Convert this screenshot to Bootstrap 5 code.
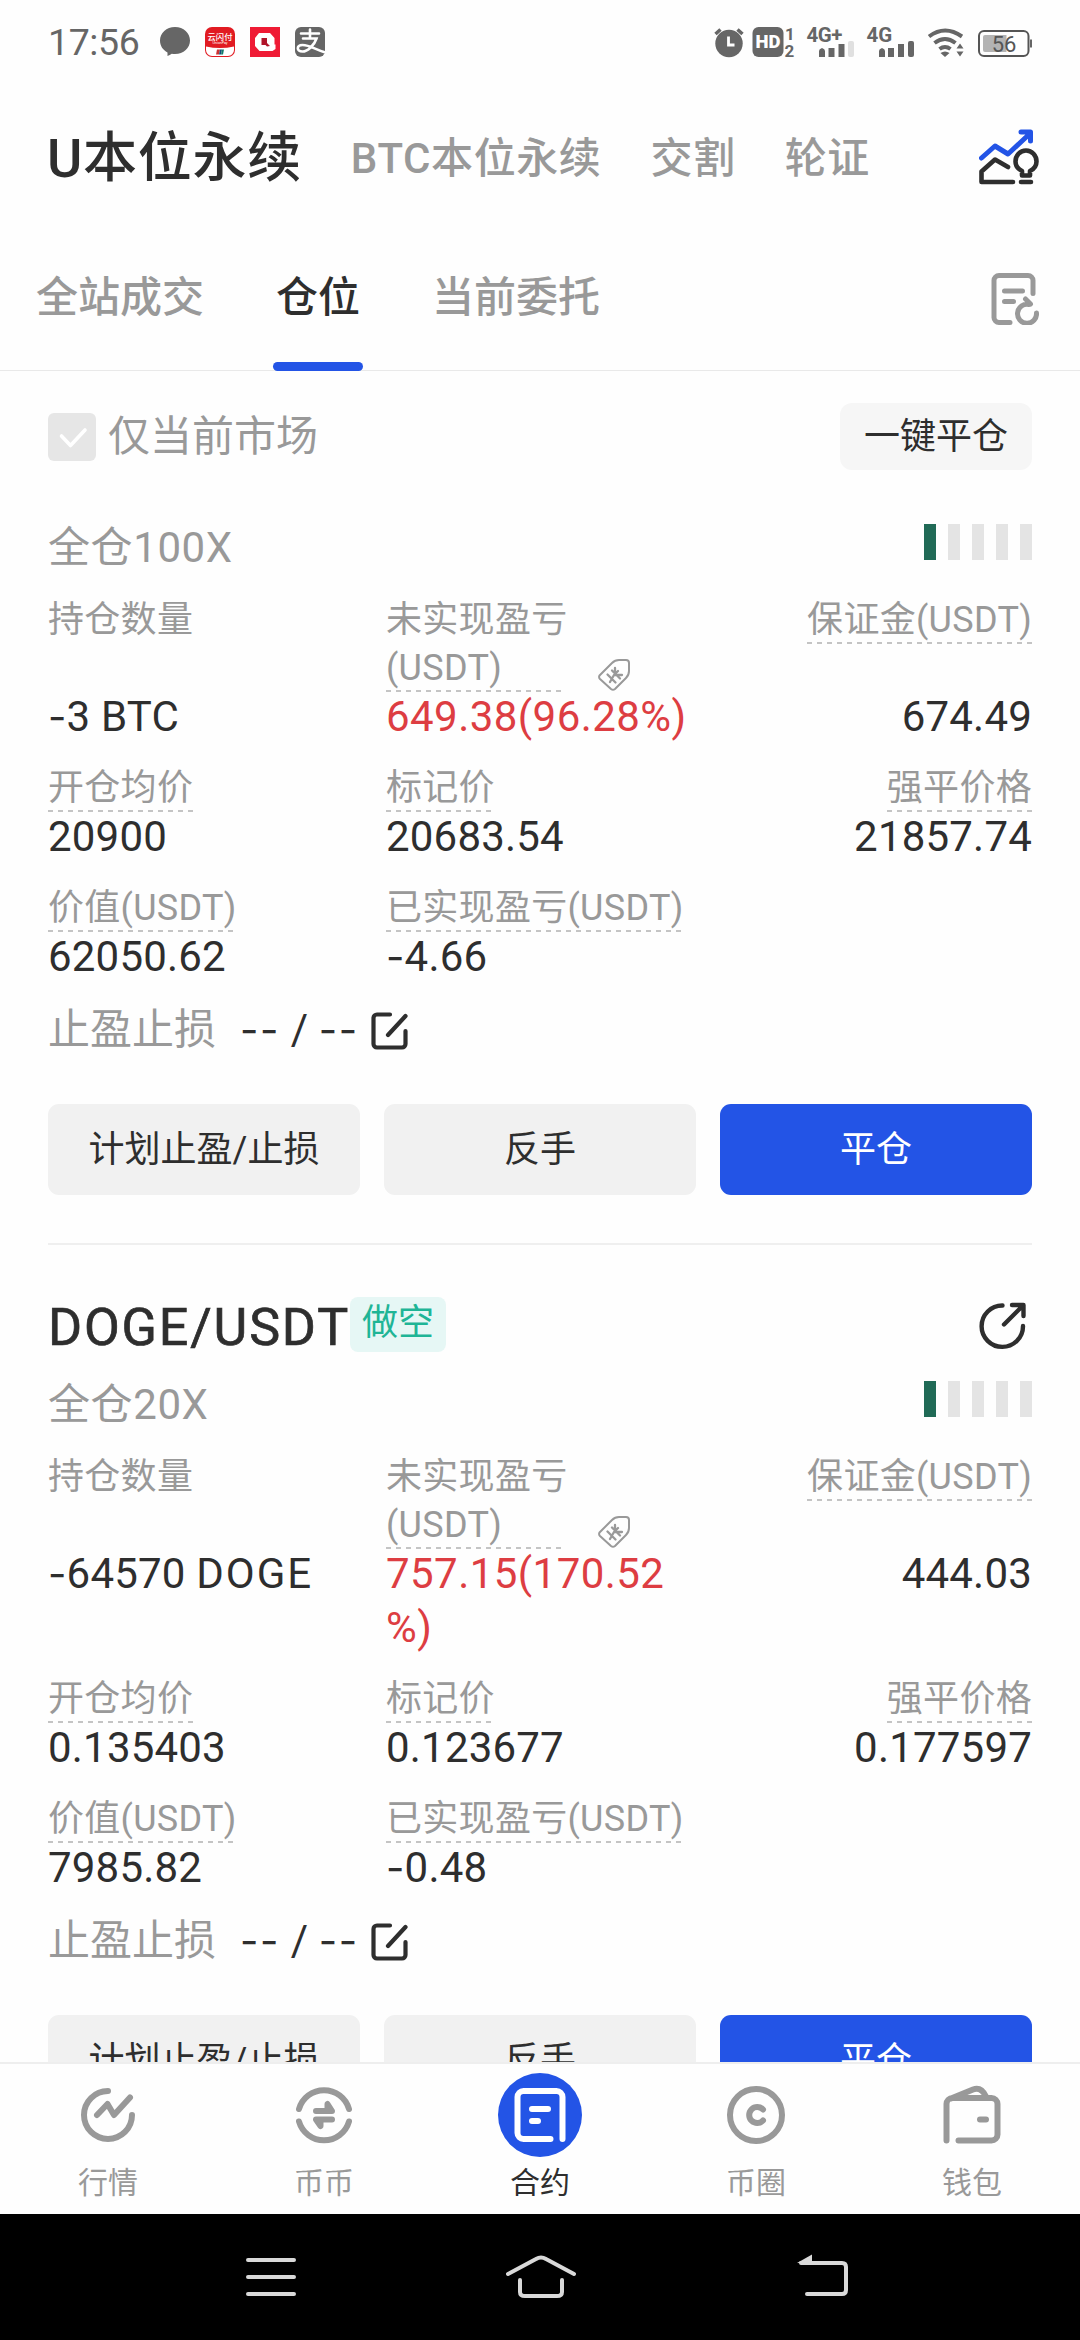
<!DOCTYPE html>
<html lang="zh-CN">
<head>
<meta charset="utf-8">
<meta name="viewport" content="width=device-width, initial-scale=1">
<title>合约 - 仓位</title>
<link href="https://cdn.jsdelivr.net/npm/bootstrap@5.3.0/dist/css/bootstrap.min.css" rel="stylesheet">
<style>
  body { font-family: Roboto, "Noto Sans CJK SC", sans-serif; color: #2e2e2e; background: #fefefe; }
  svg { display: block; flex: none; }
  .screen { width: 1080px; height: 2340px; overflow: hidden; }
  .muted { color: #999; }
  .px48 { padding-left: 48px; padding-right: 48px; }

  .status { height: 84px; padding-left: 48px; }
  .clock { font-size: 37.5px; line-height: 84px; color: #666; width: 112px; letter-spacing: -.4px; }

  .market-tabs { height: 148px; gap: 49px; padding: 2px 41px 0 47px; font-size: 42px; font-weight: 500; line-height: 60px; letter-spacing: .6px; }
  .market-tabs .current { font-size: 54px; color: #2e2e2e; letter-spacing: .7px; }
  .market-tabs svg { margin-bottom: 4px; }

  .order-tabs { height: 139px; padding: 0 41px 0 36px; gap: 72px; font-size: 42px; font-weight: 500; border-bottom: 1px solid #e9e9e9; }
  .order-tabs .nav-link { padding: 0; line-height: 132px; color: #999; }
  .order-tabs .nav-link.active { color: #2e2e2e; }
  .order-tabs .nav-link.active::after { content: ""; position: absolute; left: -3px; right: -3px; bottom: -1px; height: 9px; border-radius: 5px; background: #2354e6; }
  .order-tabs svg { margin-top: 41px; }

  .filter { padding-top: 32px; height: 151px; }
  .tick { width: 48px; height: 48px; border-radius: 6px; background: #e6e6e6; margin-right: 12px; }
  .filter-label { font-size: 42px; line-height: 66px; padding-top: 1px; }
  .btn-soft { background: #f6f6f6; font-size: 36px; line-height: 68px; height: 67px; padding: 0; width: 192px; border-radius: 12px; border: 0; color: #2e2e2e; }

  .lever { height: 74px; font-size: 42px; line-height: 52px; letter-spacing: .6px; }
  .level { gap: 12px; margin-top: 2px; }
  .level i { width: 12px; height: 36px; background: #e4e4e4; }
  .level i.on { background: #206a56; }

  .cell-a { width: 338px; }
  .cell-b { width: 320px; }
  .cell-c { flex: 1; text-align: right; }
  .facts { margin-bottom: 18px; }
  .cap { font-size: 36px; line-height: 48px; color: #999; letter-spacing: .3px; white-space: nowrap; }
  .cap-slot { flex: 1 0 auto; }
  .dashed { display: inline-block; vertical-align: top; background: repeating-linear-gradient(90deg, #c4c4c4 0 5px, transparent 5px 10px) left bottom / 100% 2px no-repeat; }
  .narrow { width: 176px; }
  .figure-text { font-size: 42px; line-height: 54px; letter-spacing: .2px; white-space: nowrap; position: relative; top: -2px; }
  .figure-text b { font: 400 40px/1 Inter, sans-serif; }
  .loss { color: #dd3d42; letter-spacing: .45px; }
  .coin { letter-spacing: 2px; }
  .deal { margin-left: 36px; margin-bottom: 1px; }

  .stops { height: 94px; padding-top: 1px; font-size: 42px; line-height: 50px; }
  .stops b { letter-spacing: 1.6px; }
  .stops svg { margin: 7px 0 0 12px; }
  .actions { gap: 24px; margin-top: 6px; }
  .actions .btn { height: 91px; flex: 1 1 0; border: 0; border-radius: 11px; padding: 0; font-size: 36px; line-height: 88px; background: #f1f1f1; color: #2e2e2e; }
  .actions .btn-go { background: #2354e6; color: #fff; }
  .rule { height: 2px; background: #efefef; margin: 48px 48px 0; }

  .pair { padding-top: 52px; height: 134px; }
  .pair-name { font-size: 52px; line-height: 62px; letter-spacing: 1.85px; -webkit-text-stroke: .7px #2e2e2e; }
  .side-tag { width: 96px; height: 55px; border-radius: 8px; background: #e6f7f5; color: #1fb596; font-size: 36px; line-height: 53px; text-align: center; }

  .dock { height: 152px; border-top: 2px solid #eee; background: #fefefe; }
  .dock a { flex: 1; color: #999; font-size: 30px; line-height: 40px; text-decoration: none; padding-top: 9px; }
  .dock a.here { color: #2e2e2e; }
  .dock svg { margin-bottom: 6px; }
  .keys { height: 126px; background: #000; padding: 0 231px 0 241px; }
  .keys .home { margin-right: 14px; }
</style>
</head>
<body>
<div class="screen d-flex flex-column">

  <header class="status d-flex align-items-center flex-shrink-0">
    <span class="clock">17:56</span>
    <svg width="166" height="84" viewBox="160 0 166 84">
      <path d="M175 27c8.600 0 15 6 15 13.500S183.600 54 175 54c-1.200 0-2.200-.1-3.200-.3-1.300 1-2.800 1.800-4.300 2.300v-3.500C163 50 160 46 160 40.500 160 33 166.400 27 175 27z" fill="#666"/>
      <rect x="205" y="27" width="30" height="30" rx="7" fill="#e11b22"/>
      <path d="M206 46.500q14 3 28 0V50a6 6 0 0 1-6 6h-16a6 6 0 0 1-6-6z" fill="#fff"/>
      <path d="M217 49.500h3l-1 5h-3z" fill="#c33"/><path d="M220 49.500h2l-1 5h-2z" fill="#124b7a"/><path d="M222 49.500h2l-1 5h-2z" fill="#137a6a"/>
      <text x="220" y="39.500" font-size="8.300" font-weight="500" text-anchor="middle" fill="#fff">云闪付</text>
      <text x="220" y="44" font-size="3.600" text-anchor="middle" fill="#fff">UnionPay</text>
      <rect x="250" y="27" width="30" height="30" fill="#ef1b35"/>
      <path d="M259 33h11l4.500 5v6.500h1V49l-3 2h-13l-4.500-5v-8z" fill="#fff"/>
      <path d="M261.500 38h5.500v5l3 3-3 .5-1.500-1.500h-4z" fill="#b0142a"/>
      <rect x="295" y="27" width="30" height="30" rx="6" fill="#666"/>
      <g fill="none" stroke="#fff" stroke-width="2.600" stroke-linecap="round"><path d="M301 33.500h18M310 29.500v8M303 38.500h13.500c-2 6.500-9 13-14 13-6.500 0-6-6.500 0-6.500 7 0 13 4.500 21.500 7"/></g>
    </svg>
    <svg class="ms-auto" width="366" height="84" viewBox="714 0 366 84" fill="#666">
      <circle cx="729" cy="43.500" r="13.700"/><path d="M715.500 34l5-4.500M742.500 34l-5-4.500" stroke="#666" stroke-width="3.500"/>
      <path d="M728.500 36.500v8.500h6" fill="none" stroke="#fff" stroke-width="2.800"/>
      <rect x="752.500" y="27" width="31" height="30" rx="6"/>
      <text x="768" y="48.300" font-size="18.500" font-weight="900" text-anchor="middle" fill="#fff" textLength="25">HD</text>
      <text x="785" y="39.500" font-size="17" font-weight="700">1</text><text x="784.500" y="57" font-size="17" font-weight="700">2</text>
      <text x="806.500" y="42" font-size="20.500" font-weight="700" textLength="36">4G+</text>
      <path d="M819 51q0-2 3-3 3 1 3 3v6h-6zM828.500 48h6v9h-6zM838.500 44h6v13h-6z"/><rect x="848" y="41" width="6" height="16" rx="2" fill="#e0e0e0"/>
      <text x="866.500" y="42" font-size="20.500" font-weight="700">4G</text>
      <path d="M879 51q0-2 3-3 3 1 3 3v6h-6zM888 48h6v9h-6zM898 44h6v13h-6z"/><rect x="908" y="41" width="6" height="16" rx="2"/>
      <g fill="none" stroke="#666" stroke-width="4"><path d="M929 36.500q16-12 33 0M934.500 43q10.500-8 21 0M939.500 49q5.500-4 11 0"/></g>
      <path d="M940.500 53q4.500-3 9 0l-4.500 4z"/>
      <path d="M960 43.500l3.500 5h-7zM960 56.500l3.500-5h-7z"/>
      <rect x="979" y="31" width="49.500" height="25" rx="5" fill="none" stroke="#555" stroke-width="2"/>
      <path d="M983 37a2 2 0 0 1 2-2h21.500v17H985a2 2 0 0 1-2-2z" fill="#b3b3b3"/><rect x="1030" y="39.500" width="2" height="8"/>
      <text x="1004" y="51.500" font-size="22" text-anchor="middle" fill="#555">56</text>
    </svg>
  </header>

  <nav class="market-tabs d-flex align-items-center flex-shrink-0 muted">
    <span class="current">U本位永续</span>
    <span>BTC本位永续</span>
    <span>交割</span>
    <span>轮证</span>
    <svg class="ms-auto" width="60" height="56" viewBox="980 127 60 56" fill="none" stroke-width="5" stroke-linecap="round" stroke-linejoin="round">
      <path d="M982.500 156l13.500-12 13 8 22-20.500M1022 130h9.500v9" stroke="#2354e6"/>
      <path d="M1009 165l-13-7.500-13.500 12V180H1014M1022 180h10M1023 173.500v-4.500c-4-2-6.500-5.500-6.500-9.500 0-6 4.500-11 10.500-11s10.500 5 10.500 11c0 4-2.500 7.500-6.500 9.500v4.500z" stroke="#2e2e2e" stroke-width="4.600"/>
    </svg>
  </nav>

  <nav class="order-tabs nav flex-nowrap flex-shrink-0">
    <a class="nav-link">全站成交</a>
    <a class="nav-link active position-relative">仓位</a>
    <a class="nav-link">当前委托</a>
    <svg class="ms-auto" width="48" height="52" viewBox="991.500 272 48 52" fill="none" stroke="#999" stroke-width="5" stroke-linecap="round" stroke-linejoin="round">
      <path d="M1010.500 321.500h-11a5 5 0 0 1-5-5v-37a5 5 0 0 1 5-5h29a5 5 0 0 1 5 5v13M1005 290h18M1005 300.500h9M1026 298l5 5M1029.500 303.500a9.500 9.500 0 1 0 7.500 8.500"/>
    </svg>
  </nav>

  <main class="flex-grow-1 overflow-hidden">
    <div class="filter px48 d-flex justify-content-between align-items-start">
      <div class="d-flex align-items-center muted">
        <span class="tick"><svg width="48" height="48" viewBox="0 0 48 48" fill="none" stroke="#fff" stroke-width="3.600" stroke-linecap="round" stroke-linejoin="round"><path d="M13.500 23l9 9.500L37 17"/></svg></span>
        <span class="filter-label">仅当前市场</span>
      </div>
      <button class="btn btn-soft">一键平仓</button>
    </div>

    <section>
      <div class="lever px48 d-flex justify-content-between align-items-start muted">
        <span>全仓100X</span>
        <span class="level d-flex"><i class="on"></i><i></i><i></i><i></i><i></i></span>
      </div>
      <div class="facts px48 d-flex">
        <div class="cell-a d-flex flex-column"><div class="cap cap-slot">持仓数量</div><div class="figure-text"><b>-</b>3 BTC</div></div>
        <div class="cell-b">
          <div class="d-flex align-items-end"><span class="cap dashed narrow">未实现盈亏<br>(USDT)</span>
            <svg class="deal" width="32" height="32" viewBox="0 0 32 32" fill="none" stroke="#999" stroke-width="2" stroke-linejoin="round" stroke-linecap="round"><path d="M1.500 16.500L14 4q3-3 7-3h7q3 0 3 3v8q0 4-3 7L17 30q-2 1.500-4 0L2 20q-1.500-1.500-.5-3.500z"/><path d="M17 9v7h7M16 16l-4 7M9.500 15.500l8 8M14 11.500l8 8M16 16l4-4" stroke-width="2.300"/></svg></div>
          <div class="figure-text loss">649.38(96.28%)</div>
        </div>
        <div class="cell-c d-flex flex-column"><div class="cap cap-slot"><span class="dashed">保证金(USDT)</span></div><div class="figure-text">674.49</div></div>
      </div>
      <div class="facts px48 d-flex">
        <div class="cell-a"><span class="cap dashed">开仓均价</span><div class="figure-text">20900</div></div>
        <div class="cell-b"><span class="cap dashed">标记价</span><div class="figure-text">20683.54</div></div>
        <div class="cell-c"><span class="cap dashed">强平价格</span><div class="figure-text">21857.74</div></div>
      </div>
      <div class="facts px48 d-flex">
        <div class="cell-a"><span class="cap dashed">价值(USDT)</span><div class="figure-text">62050.62</div></div>
        <div class="cell-b"><span class="cap dashed">已实现盈亏(USDT)</span><div class="figure-text"><b>-</b>4.66</div></div>
      </div>
      <div class="stops px48 d-flex align-items-start">
        <span class="muted">止盈止损</span>
        <span class="figure-text ms-4"><b>--</b> / <b>--</b></span>
        <svg width="37" height="38" viewBox="0 0 37 38" fill="none" stroke="#2e2e2e" stroke-width="4.200" stroke-linecap="round" stroke-linejoin="round"><path d="M19 2.500H6A3.500 3.500 0 0 0 2.500 6v26A3.500 3.500 0 0 0 6 35.500h25a3.500 3.500 0 0 0 3.500-3.500V19M17 23L34.500 4"/></svg>
      </div>
      <div class="actions px48 d-flex">
        <button class="btn">计划止盈/止损</button><button class="btn">反手</button><button class="btn btn-go">平仓</button>
      </div>
      <div class="rule"></div>
    </section>

    <section>
      <div class="pair px48 d-flex align-items-start">
        <span class="pair-name">DOGE/USDT</span><span class="side-tag">做空</span>
        <svg class="ms-auto mt-1" width="54" height="50" viewBox="978 1300 54 50" fill="none" stroke="#2e2e2e" stroke-width="4.400" stroke-linecap="round" stroke-linejoin="round"><path d="M1002.500 1304.500a20.700 20.700 0 1 0 20.500 20.500M1004 1323.500l19-19M1012 1304h11.500v11"/></svg>
      </div>
      <div class="lever px48 d-flex justify-content-between align-items-start muted">
        <span>全仓20X</span>
        <span class="level d-flex"><i class="on"></i><i></i><i></i><i></i><i></i></span>
      </div>
      <div class="facts px48 d-flex">
        <div class="cell-a"><div class="cap">持仓数量<br>&nbsp;</div><div class="figure-text"><b>-</b>64570 <span class="coin">DOGE</span></div></div>
        <div class="cell-b">
          <div class="d-flex align-items-end"><span class="cap dashed narrow">未实现盈亏<br>(USDT)</span>
            <svg class="deal" width="32" height="32" viewBox="0 0 32 32" fill="none" stroke="#999" stroke-width="2" stroke-linejoin="round" stroke-linecap="round"><path d="M1.500 16.500L14 4q3-3 7-3h7q3 0 3 3v8q0 4-3 7L17 30q-2 1.500-4 0L2 20q-1.500-1.500-.5-3.500z"/><path d="M17 9v7h7M16 16l-4 7M9.500 15.500l8 8M14 11.500l8 8M16 16l4-4" stroke-width="2.300"/></svg></div>
          <div class="figure-text loss">757.15(170.52<br>%)</div>
        </div>
        <div class="cell-c"><span class="cap dashed">保证金(USDT)</span><div class="cap">&nbsp;</div><div class="figure-text">444.03</div></div>
      </div>
      <div class="facts px48 d-flex">
        <div class="cell-a"><span class="cap dashed">开仓均价</span><div class="figure-text">0.135403</div></div>
        <div class="cell-b"><span class="cap dashed">标记价</span><div class="figure-text">0.123677</div></div>
        <div class="cell-c"><span class="cap dashed">强平价格</span><div class="figure-text">0.177597</div></div>
      </div>
      <div class="facts px48 d-flex">
        <div class="cell-a"><span class="cap dashed">价值(USDT)</span><div class="figure-text">7985.82</div></div>
        <div class="cell-b"><span class="cap dashed">已实现盈亏(USDT)</span><div class="figure-text"><b>-</b>0.48</div></div>
      </div>
      <div class="stops px48 d-flex align-items-start">
        <span class="muted">止盈止损</span>
        <span class="figure-text ms-4"><b>--</b> / <b>--</b></span>
        <svg width="37" height="38" viewBox="0 0 37 38" fill="none" stroke="#2e2e2e" stroke-width="4.200" stroke-linecap="round" stroke-linejoin="round"><path d="M19 2.500H6A3.500 3.500 0 0 0 2.500 6v26A3.500 3.500 0 0 0 6 35.500h25a3.500 3.500 0 0 0 3.500-3.500V19M17 23L34.500 4"/></svg>
      </div>
      <div class="actions px48 d-flex">
        <button class="btn">计划止盈/止损</button><button class="btn">反手</button><button class="btn btn-go">平仓</button>
      </div>
    </section>
  </main>

  <nav class="dock d-flex flex-shrink-0">
    <a class="d-flex flex-column align-items-center">
      <svg width="84" height="84" viewBox="66 2073 84 84" fill="none" stroke="#999" stroke-width="6" stroke-linecap="round" stroke-linejoin="round"><path d="M108 2091a24 24 0 1 0 24 24M97 2115l10.500-11 6.500 11 16-17.500"/></svg>行情</a>
    <a class="d-flex flex-column align-items-center">
      <svg width="84" height="84" viewBox="282 2073 84 84" fill="none" stroke="#999" stroke-width="6" stroke-linecap="round" stroke-linejoin="round"><path d="M299 2109a26 26 0 0 1 50 0M299 2121.500a26 26 0 0 0 50 0M316 2111h16l-4.500-7v5M332 2119.500h-16l4.500 6.500v-5"/></svg>币币</a>
    <a class="here d-flex flex-column align-items-center">
      <svg width="84" height="84" viewBox="498 2073 84 84" fill="none" stroke="#fff" stroke-width="6" stroke-linecap="round" stroke-linejoin="round"><circle cx="540" cy="2115" r="42" fill="#2354e6" stroke="none"/><path d="M550.500 2139h-27a6 6 0 0 1-6-6v-36a6 6 0 0 1 6-6h33a6 6 0 0 1 6 6v42M532 2109h16M532 2121h6"/></svg>合约</a>
    <a class="d-flex flex-column align-items-center">
      <svg width="84" height="84" viewBox="714 2073 84 84" fill="none" stroke="#999" stroke-width="6" stroke-linecap="round"><circle cx="756" cy="2115" r="26"/><path d="M763 2109.500a8 8 0 1 0 0 11"/></svg>币圈</a>
    <a class="d-flex flex-column align-items-center">
      <svg width="84" height="84" viewBox="930 2073 84 84" fill="none" stroke="#999" stroke-width="6" stroke-linecap="round" stroke-linejoin="round"><path d="M946.500 2140.500v-36.500a6 6 0 0 1 6-6h39a6 6 0 0 1 6 6v30.500a6 6 0 0 1-6 6h-33M951 2098.500l22-9q8-3 13 7M980 2119.500h6"/></svg>钱包</a>
  </nav>

  <footer class="keys d-flex justify-content-between align-items-center flex-shrink-0">
    <svg width="60" height="50" viewBox="241 2252 60 50" fill="none" stroke="#d9d9d9" stroke-width="4" stroke-linecap="round"><path d="M248 2260h46M248 2277h46M248 2294h46"/></svg>
    <svg class="home" width="72" height="50" viewBox="505 2252 72 50" fill="none" stroke="#d9d9d9" stroke-width="4" stroke-linecap="round" stroke-linejoin="round"><path d="M508 2274l28-15q5-3 10 0l28 15M520 2280v12q0 4 5 4h32q5 0 5-4v-12"/></svg>
    <svg width="54" height="50" viewBox="796 2252 54 50" fill="none" stroke="#d9d9d9" stroke-width="4" stroke-linecap="round"><path d="M802 2263h41q4 0 4 4v23q0 4-4 4h-35"/><path d="M798 2263l15-8.500v9z" fill="#d9d9d9" stroke="none"/></svg>
  </footer>
</div>
<script src="https://cdn.jsdelivr.net/npm/bootstrap@5.3.0/dist/js/bootstrap.bundle.min.js"></script>
</body>
</html>
